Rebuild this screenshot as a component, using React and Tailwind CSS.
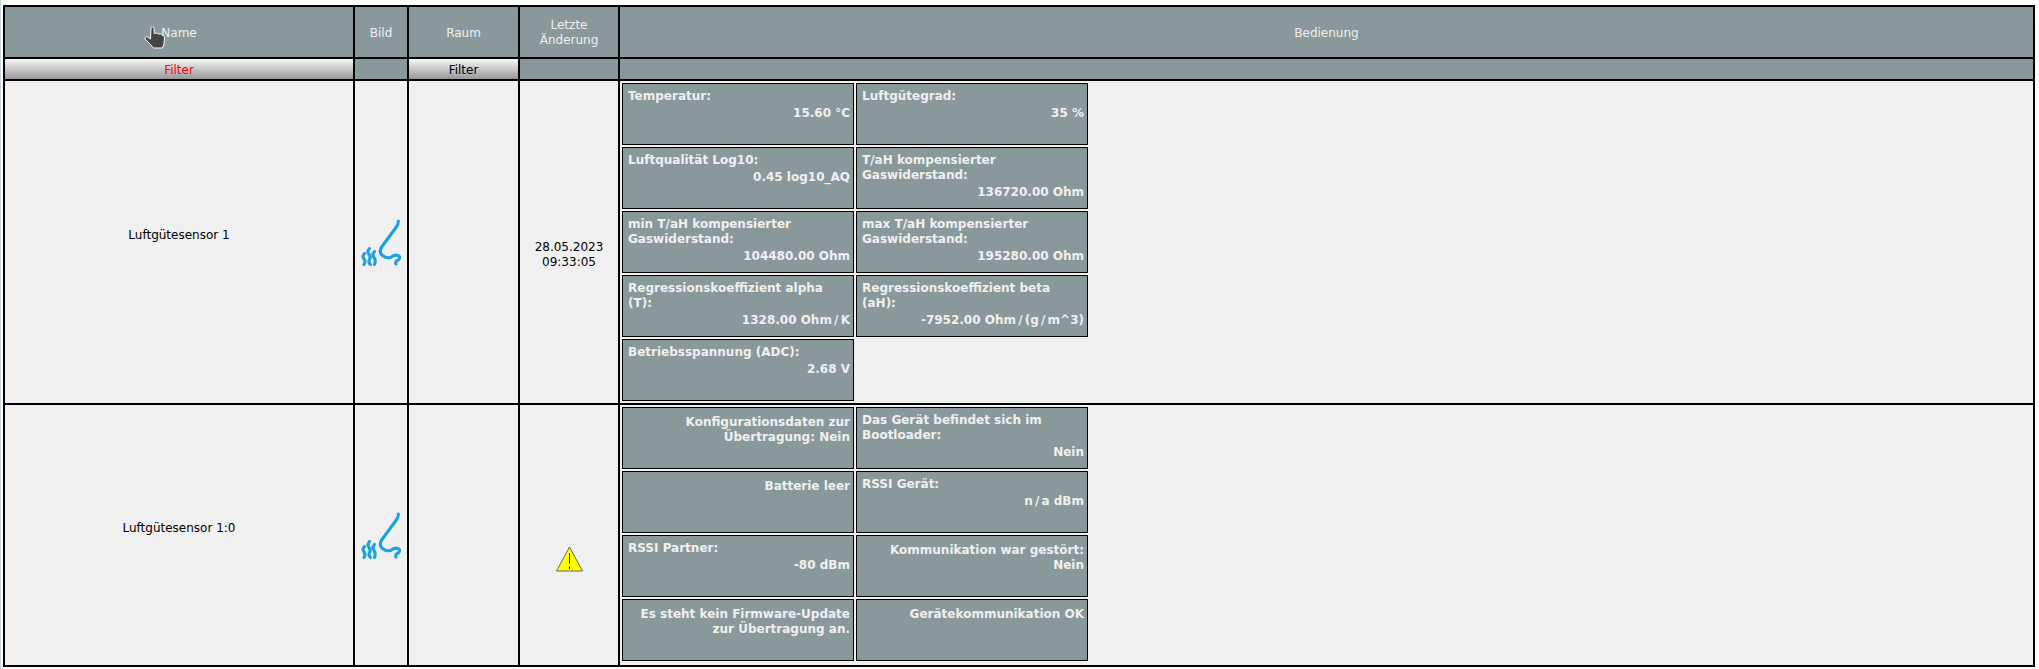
const rows1 = [
  { label: "Temperatur:", value: "15.60 °C" },
  { label: "Luftgütegrad:", value: "35 %" },
  { label: "Luftqualität Log10:", value: "0.45 log10_AQ" },
  { label: "T/aH kompensierter Gaswiderstand:", value: "136720.00 Ohm" },
  { label: "min T/aH kompensierter Gaswiderstand:", value: "104480.00 Ohm" },
  { label: "max T/aH kompensierter Gaswiderstand:", value: "195280.00 Ohm" },
  { label: "Regressionskoeffizient alpha (T):", value: "1328.00 Ohm/K" },
  { label: "Regressionskoeffizient beta (aH):", value: "-7952.00 Ohm/(g/m^3)" },
  { label: "Betriebsspannung (ADC):", value: "2.68 V" },
];

const rows2 = [
  { status: ["Konfigurationsdaten zur", "Übertragung: Nein"] },
  { label: "Das Gerät befindet sich im Bootloader:", value: "Nein" },
  { status: ["Batterie leer"] },
  { label: "RSSI Gerät:", value: "n/a dBm" },
  { label: "RSSI Partner:", value: "-80 dBm" },
  { status: ["Kommunikation war gestört:", "Nein"] },
  { status: ["Es steht kein Firmware-Update", "zur Übertragung an."] },
  { status: ["Gerätekommunikation OK"] },
];

// the slash sits wider in the original than in this font
function Value({ text }) {
  const parts = text.split("/");
  return parts.map((part, i) => (
    <span key={i}>
      {i > 0 && <span className="px-[2.2px]">/</span>}
      {part}
    </span>
  ));
}

function Card({ item }) {
  return (
    <div className="h-[62px] border border-black bg-[#89999b] pr-[3px] pl-[5px] text-[12px] leading-[15px] font-bold text-[#f0f0f0]">
      {item.status ? (
        <div className="pt-[7px] text-right">
          {item.status.map((line) => (
            <div key={line}>{line}</div>
          ))}
        </div>
      ) : (
        <div className="pt-[5px]">
          <div>{item.label}</div>
          <div className="mt-[2px] text-right">
            <Value text={item.value} />
          </div>
        </div>
      )}
    </div>
  );
}

function Nose() {
  return (
    <svg width="40" height="50" viewBox="0 0 40 50" fill="none" stroke="#1ba1e2" strokeWidth="3.1" strokeLinecap="round" strokeLinejoin="round" className="mx-auto block">
      <path d="M37.3 4 C37.5 7 36.5 8.5 35 10.5 L21 29.5 C18.5 33 18.5 36 21.5 38.5 C24 40.5 27 41 29.5 40.5 C32 38.5 35.5 37.5 38 39 C39.5 40.5 38 43 35.5 44 C34.5 45 34.5 46 35 47" />
      <path d="M3.5 36.5 C1.5 38.5 1.5 40 3 42 C4.5 44 4.5 45.5 3 47.5" />
      <path d="M8.5 31.5 C6.5 33.5 6.5 35.5 8 37.5 C9.5 39.5 9.5 41 8.5 42.5 C7.5 44 8 46 9.5 47.5" />
      <path d="M13.5 34.5 C11.5 36.5 11.5 38.5 13 40.5 C14.5 42.5 14.5 45 13.5 47.5" />
    </svg>
  );
}

function Warning() {
  return (
    <svg width="27" height="26" viewBox="0 0 27 26" className="mx-auto block">
      <path d="M13.5 1 L26.5 25 L0.5 25 Z" fill="#ffff00" stroke="#666666" strokeWidth="1" strokeLinejoin="round" />
      <path d="M13.5 7 L13.5 18 M13.5 20 L13.5 23" stroke="#333333" strokeWidth="1" fill="none" />
    </svg>
  );
}

function HandCursor() {
  return (
    <svg width="22" height="23" viewBox="0 0 22 23" className="absolute top-[19px] left-[139px]">
      <path
        d="M7 1.5 C8 0.5 9.5 0.5 10 2 L10.3 7.5 C12 7 13.5 7 14.5 8 C16.5 7.5 18 8 18.5 9.5 C20 9.5 20.5 10.5 20.5 12 L20 18 L18.5 22 L9.5 22 L5.5 17.5 L1 13 C0.5 11.5 2 10.5 3.5 11 L6.5 13 Z"
        fill="#444444"
        stroke="#ffffff"
        strokeWidth="1"
        strokeLinejoin="round"
      />
    </svg>
  );
}

const th = "border-2 border-black bg-[#89999b] p-0 pt-[2px] text-center align-middle text-[12px] leading-[15px] font-normal text-[#f0f0f0]";
const filter = "border-2 border-black bg-gradient-to-b from-[#f8f8f8] to-[#999999] p-0 pt-[1px] text-center text-[12px] font-normal";
const empty = "border-2 border-black bg-[#89999b] p-0";
const td = "border-2 border-black bg-[#f0f0f0] p-0 text-center align-middle text-[12px] leading-[15px] text-black";

export default function App() {
  return (
    <div className="h-[669px] overflow-hidden border-l border-[#c8d6e4] bg-white pt-[5px] pl-[2px] font-['DejaVu_Sans',sans-serif]">
      <table className="w-[2030px] table-fixed border-collapse">
        <colgroup>
          <col className="w-[350px]" />
          <col className="w-[54px]" />
          <col className="w-[111px]" />
          <col className="w-[100px]" />
          <col className="w-[1415px]" />
        </colgroup>
        <thead>
          <tr className="h-[52px]">
            <th className={`${th} relative`}>
              Name
              <HandCursor />
            </th>
            <th className={th}>Bild</th>
            <th className={th}>Raum</th>
            <th className={th}>
              Letzte
              <br />
              Änderung
            </th>
            <th className={th}>Bedienung</th>
          </tr>
          <tr className="h-[22px]">
            <th className={`${filter} text-[#ff0000]`}>Filter</th>
            <th className={empty}></th>
            <th className={`${filter} text-black`}>Filter</th>
            <th className={empty}></th>
            <th className={empty}></th>
          </tr>
        </thead>
        <tbody>
          <tr className="h-[324px]">
            <td className={`${td} pb-[14px]`}>Luftgütesensor 1</td>
            <td className={td}>
              <Nose />
            </td>
            <td className={td}></td>
            <td className={`${td} pt-[26px]`}>
              28.05.2023
              <br />
              09:33:05
            </td>
            <td className={`${td} text-left align-top`}>
              <div className="grid grid-cols-[232px_232px] gap-[2px] p-[2px]">
                {rows1.map((item) => (
                  <Card key={item.label} item={item} />
                ))}
              </div>
            </td>
          </tr>
          <tr className="h-[262px]">
            <td className={`${td} pb-[14px]`}>Luftgütesensor 1:0</td>
            <td className={td}>
              <Nose />
            </td>
            <td className={td}></td>
            <td className={`${td} pt-[48px]`}>
              <Warning />
            </td>
            <td className={`${td} text-left align-top`}>
              <div className="grid grid-cols-[232px_232px] gap-[2px] p-[2px]">
                {rows2.map((item, i) => (
                  <Card key={i} item={item} />
                ))}
              </div>
            </td>
          </tr>
        </tbody>
      </table>
    </div>
  );
}
